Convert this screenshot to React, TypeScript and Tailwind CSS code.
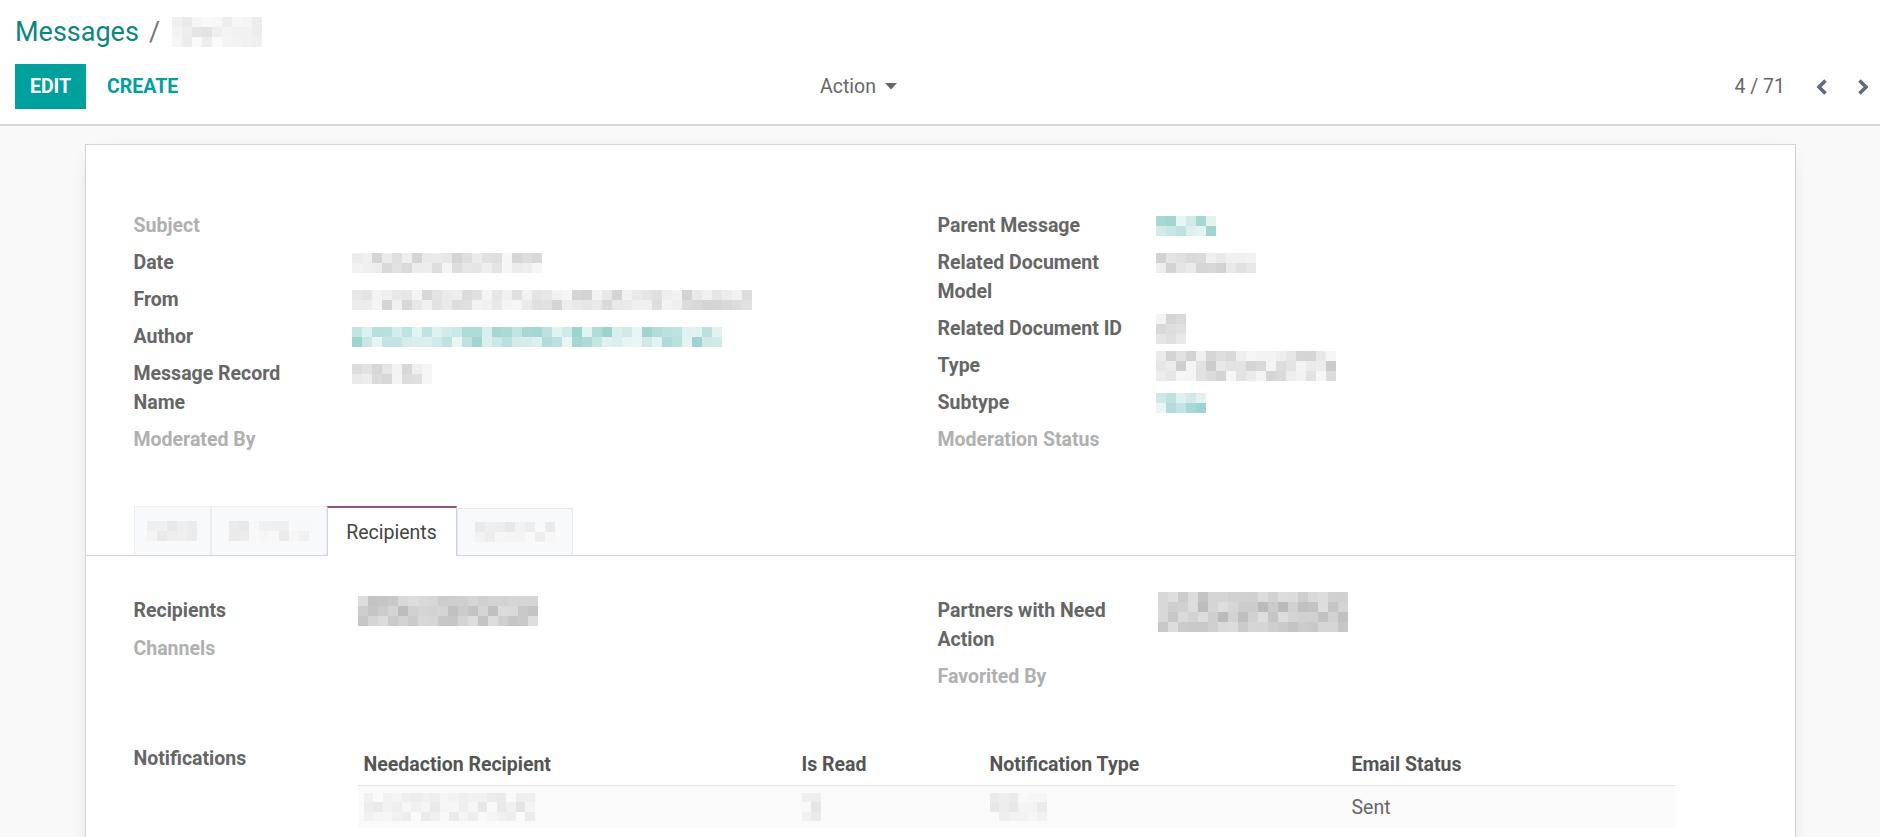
import React from 'react';

function rng(seed: number) {
  let s = seed;
  return () => {
    s = (s * 9301 + 49297) % 233280;
    return s / 233280;
  };
}

type Pal = 'gray' | 'teal' | 'dark' | 'faint';
const PALS: Record<Pal, [number[], number[]]> = {
  gray: [[246, 246, 246], [198, 198, 198]],
  teal: [[234, 246, 245], [130, 199, 194]],
  dark: [[222, 222, 222], [186, 186, 186]],
  faint: [[250, 250, 250], [226, 226, 226]],
};

function Blur({ w, rows = 2, seed, pal = 'gray', cell = 10 }: { w: number; rows?: number; seed: number; pal?: Pal; cell?: number }) {
  const r = rng(seed);
  const cols = Math.max(1, Math.round(w / cell));
  const [a, b] = PALS[pal];
  return (
    <div className="flex flex-col shrink-0">
      {Array.from({ length: rows }).map((_, i) => (
        <div key={i} className="flex">
          {Array.from({ length: cols }).map((_, j) => {
            const t = Math.pow(r(), 1.2) * (i === 0 || i === rows - 1 ? 0.75 : 1);
            const c = a.map((v, k) => Math.round(v + (b[k] - v) * t));
            return <div key={j} style={{ width: cell, height: cell, backgroundColor: `rgb(${c.join(',')})` }} />;
          })}
        </div>
      ))}
    </div>
  );
}

function Field({ label, empty, children, top }: { label: string; empty?: boolean; children?: React.ReactNode; top?: boolean }) {
  return (
    <div className="grid grid-cols-[218px_1fr]">
      <div className={empty ? 'font-bold leading-[29px] text-[#b0b0b0] pr-[23px]' : 'font-bold leading-[29px] text-[#666666] pr-[23px]'}>{label}</div>
      <div className={top ? 'flex items-start' : 'flex h-[29px] items-center'}>{children}</div>
    </div>
  );
}

function ChevronLeft() {
  return (
    <svg width="14" height="18" viewBox="0 0 14 18">
      <polyline points="10.5,2.5 4,9 10.5,15.5" fill="none" stroke="#5f6b77" strokeWidth="3.6" />
    </svg>
  );
}
function ChevronRight() {
  return (
    <svg width="14" height="18" viewBox="0 0 14 18">
      <polyline points="3.5,2.5 10,9 3.5,15.5" fill="none" stroke="#5f6b77" strokeWidth="3.6" />
    </svg>
  );
}

export default function App() {
  return (
    <div className="font-['Roboto','Noto_Sans',sans-serif] text-[19.5px] text-[#666666] bg-[#f9f9f9] min-h-[837px] overflow-hidden">
      {/* Control panel */}
      <div className="bg-white border-b-2 border-[#d6d6d6] pl-[15px] pr-[2px] pt-[12px] pb-[15px]">
        <div className="flex items-center h-[40px] text-[27px] leading-[40px]">
          <span className="text-[#0b8682]">Messages</span>
          <span className="text-[#777777] ml-[10px] mr-[12px]">/</span>
          <Blur w={90} rows={3} seed={11} pal="faint" />
        </div>
        <div className="mt-[12px] flex items-center h-[45px]">
          <div className="flex items-center w-[882px]">
            <button className="bg-[#00a09d] text-white font-bold uppercase h-[45px] w-[71px] leading-[29px]">EDIT</button>
            <button className="text-[#00a09d] font-bold uppercase ml-[21px] leading-[29px]">CREATE</button>
            <div className="ml-auto flex items-center text-[#666666]">
              <span>Action</span>
              <svg className="ml-[9px]" width="12" height="7" viewBox="0 0 12 7">
                <polygon points="0,0 12,0 6,6.5" fill="#666666" />
              </svg>
            </div>
          </div>
          <div className="ml-auto flex items-center">
            <span className="text-[#666666]">4 / 71</span>
            <div className="ml-[22px] w-[30px] flex justify-center"><ChevronLeft /></div>
            <div className="ml-[11px] w-[30px] flex justify-center"><ChevronRight /></div>
          </div>
        </div>
      </div>

      {/* Sheet */}
      <div className="pt-[18px]">
        <div className="mx-auto w-[1711px] min-h-[760px] bg-white border border-[#ced4da] shadow-[0_5px_20px_-12px_rgba(0,0,0,0.35)]">
          <div className="grid grid-cols-[804px_1fr] px-[48px] pt-[66px]">
            <div className="flex flex-col gap-[8px]">
              <Field label="Subject" empty />
              <Field label="Date"><Blur w={190} seed={3} /></Field>
              <Field label="From"><Blur w={400} seed={7} /></Field>
              <Field label="Author"><Blur w={370} seed={9} pal="teal" /></Field>
              <Field label="Message Record Name" top><div className="mt-[5px]"><Blur w={80} seed={13} /></div></Field>
              <Field label="Moderated By" empty />
            </div>
            <div className="flex flex-col gap-[8px]">
              <Field label="Parent Message"><Blur w={60} seed={17} pal="teal" /></Field>
              <Field label="Related Document Model" top><div className="mt-[5px]"><Blur w={100} seed={19} /></div></Field>
              <Field label="Related Document ID"><Blur w={30} rows={3} seed={23} /></Field>
              <Field label="Type"><Blur w={180} rows={3} seed={29} /></Field>
              <Field label="Subtype"><Blur w={50} seed={31} pal="teal" /></Field>
              <Field label="Moderation Status" empty />
            </div>
          </div>

          {/* Notebook tabs */}
          <div className="mt-[52px] flex items-end border-b border-[#d2d6da] pl-[48px]">
            <div className="h-[49px] w-[77px] border border-b-0 border-[#eceef0] bg-[#f8f9fa] flex items-center justify-center">
              <Blur w={50} seed={37} pal="faint" />
            </div>
            <div className="h-[49px] w-[116px] border border-b-0 border-[#eceef0] bg-[#f8f9fa] flex items-center justify-center">
              <Blur w={80} seed={41} pal="faint" />
            </div>
            <div className="h-[50px] -mb-px w-[130px] bg-white border-x border-t-2 border-x-[#ced4da] border-t-[#875a7b] flex items-center justify-center text-[#444444] leading-[29px]">
              Recipients
            </div>
            <div className="h-[47px] w-[116px] border border-b-0 border-[#e6e8eb] bg-[#f8f9fa] flex items-center justify-center">
              <Blur w={80} seed={43} pal="faint" />
            </div>
          </div>

          {/* Tab content */}
          <div className="px-[48px] pt-[40px]">
            <div className="grid grid-cols-[804px_1fr]">
              <div className="flex flex-col gap-[8px]">
                <Field label="Recipients" top><div className="ml-[6px]"><Blur w={180} rows={3} seed={47} pal="dark" /></div></Field>
                <Field label="Channels" empty />
              </div>
              <div className="flex flex-col gap-[8px]">
                <Field label="Partners with Need Action" top><div className="-mt-[4px] ml-[2px]"><Blur w={190} rows={4} seed={53} pal="dark" /></div></Field>
                <Field label="Favorited By" empty />
              </div>
            </div>

            <div className="mt-[53px] grid grid-cols-[218px_1fr]">
              <div className="font-bold leading-[29px] text-[#666666]">Notifications</div>
              <table className="ml-[6px] w-[1318px] table-fixed border-collapse">
                <thead>
                  <tr>
                    <th className="w-[438px] text-left font-bold text-[#555555] px-[6px] py-[6px] leading-[29px]">Needaction Recipient</th>
                    <th className="w-[188px] text-left font-bold text-[#555555] px-[6px] py-[6px] leading-[29px]">Is Read</th>
                    <th className="w-[362px] text-left font-bold text-[#555555] px-[6px] py-[6px] leading-[29px]">Notification Type</th>
                    <th className="w-[330px] text-left font-bold text-[#555555] px-[6px] py-[6px] leading-[29px]">Email Status</th>
                  </tr>
                </thead>
                <tbody>
                  <tr className="bg-[#fafafa] border-t border-[#e6e6e6]">
                    <td className="px-[6px] py-[6px] leading-[29px]"><Blur w={170} rows={3} cell={9.5} seed={59} pal="faint" /></td>
                    <td className="px-[6px] py-[6px] leading-[29px]"><Blur w={20} rows={3} cell={9.5} seed={61} pal="faint" /></td>
                    <td className="px-[6px] py-[6px] leading-[29px]"><Blur w={60} rows={3} cell={9.5} seed={67} pal="faint" /></td>
                    <td className="px-[6px] py-[6.5px] leading-[29px] text-[#666666]">Sent</td>
                  </tr>
                </tbody>
              </table>
            </div>
          </div>
        </div>
      </div>
    </div>
  );
}
